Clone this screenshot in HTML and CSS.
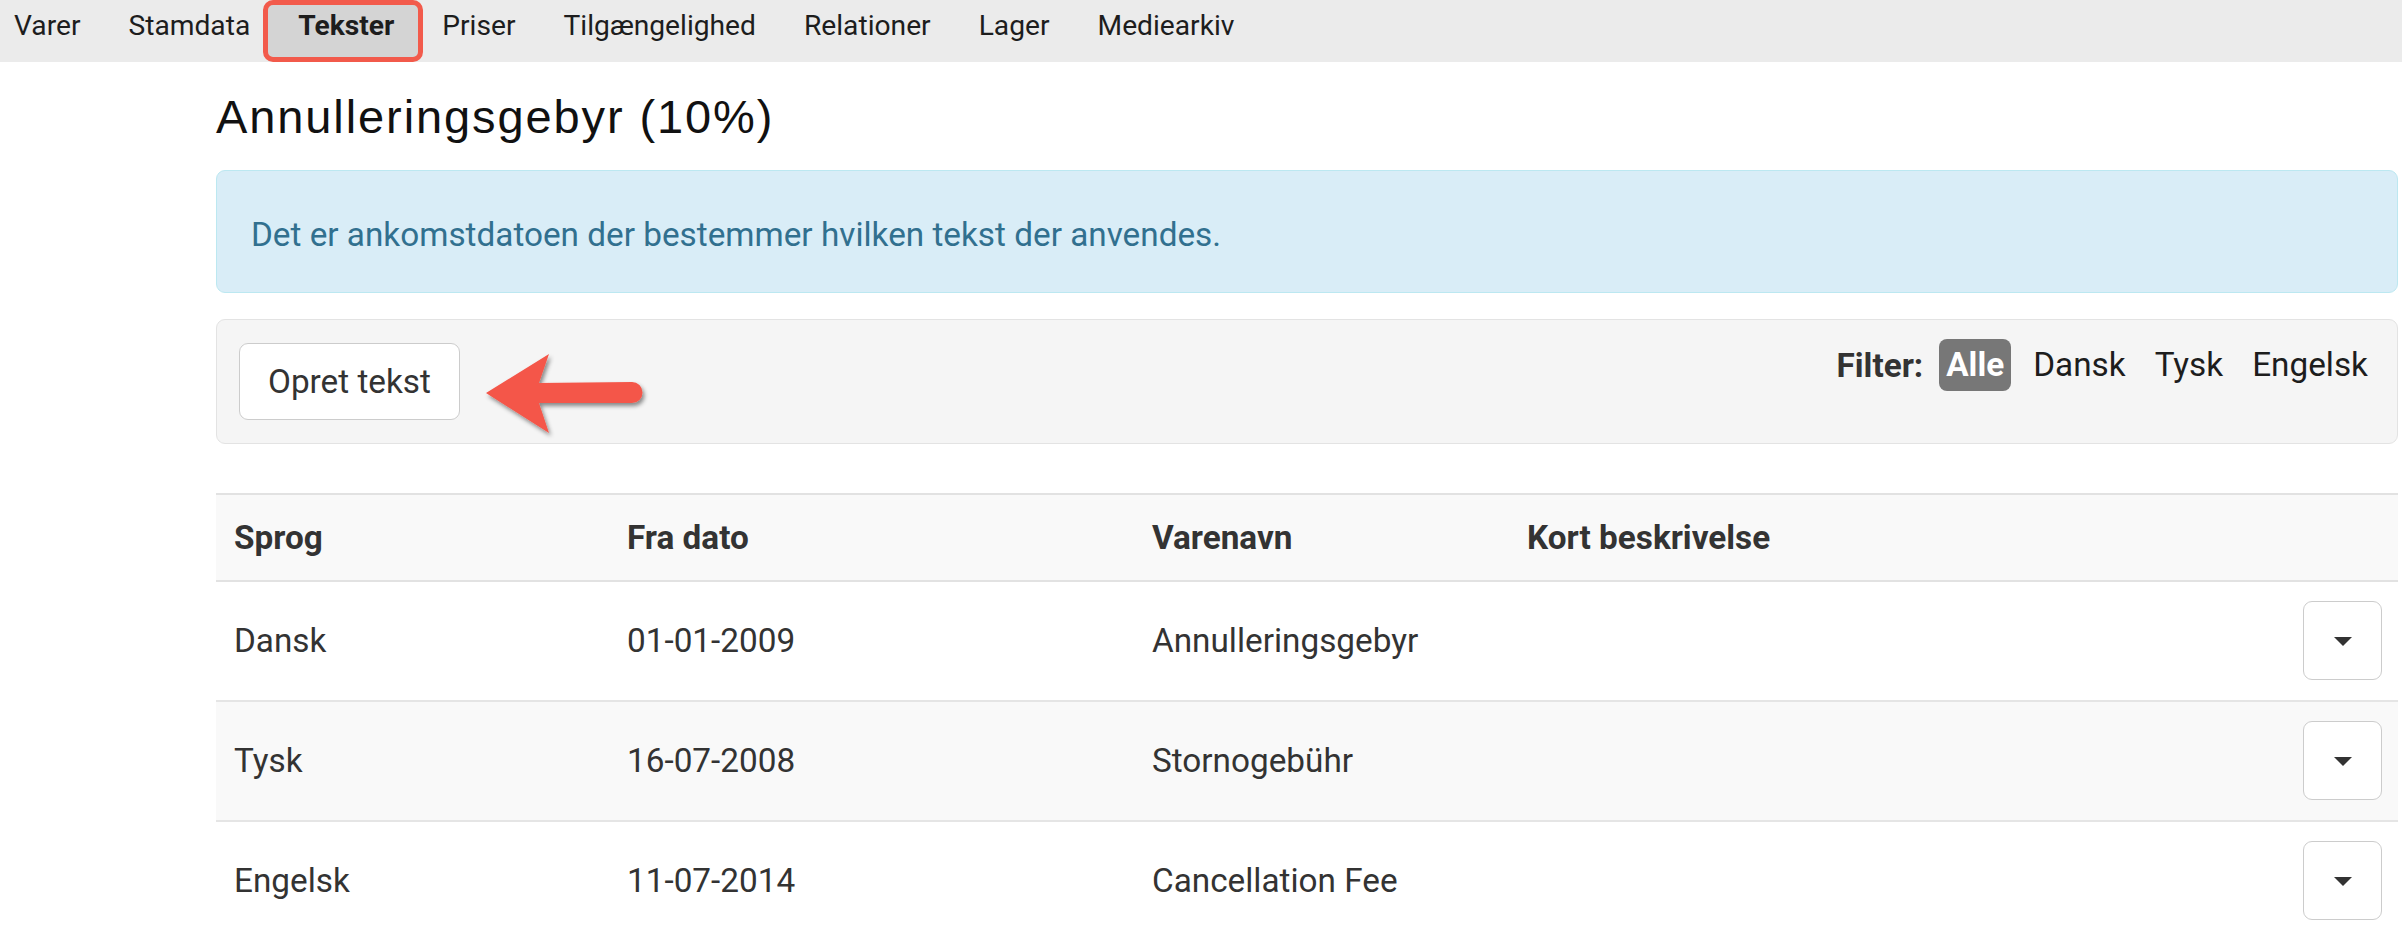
FILE: index.html
```html
<!DOCTYPE html>
<html lang="da">
<head>
  <meta charset="UTF-8">
  <title>Tekster - Annulleringsgebyr</title>
  <link rel="stylesheet" href="styles.css">
</head>
<body>

  <nav class="tabs">
    <a href="#">Varer</a>
    <a href="#">Stamdata</a>
    <a href="#" class="active">Tekster</a>
    <a href="#">Priser</a>
    <a href="#">Tilgængelighed</a>
    <a href="#">Relationer</a>
    <a href="#">Lager</a>
    <a href="#">Mediearkiv</a>
  </nav>

  <div class="page">
    <h2 class="title">Annulleringsgebyr (10%)</h2>

    <div class="alert">Det er ankomstdatoen der bestemmer hvilken tekst der anvendes.</div>

    <div class="toolbar">
      <button class="btn">Opret tekst</button>

      <!-- pil der peger på knappen -->
      <svg class="arrow" width="170" height="100" viewBox="0 0 170 100">
        <defs>
          <filter id="shadow" x="-20%" y="-20%" width="140%" height="150%">
            <feDropShadow dx="2" dy="3" stdDeviation="2" flood-color="#000" flood-opacity="0.45"/>
          </filter>
        </defs>
        <path d="M5 45 L68 6 L58 35 L151 34 A10.5 10.5 0 0 1 151 55 L58 55 L68 85 Z" fill="#f45649" filter="url(#shadow)"/>
      </svg>

      <div class="filter">
        <b>Filter:</b>
        <a href="#" class="on">Alle</a>
        <a href="#">Dansk</a>
        <a href="#">Tysk</a>
        <a href="#">Engelsk</a>
      </div>
    </div>

    <table class="texts">
      <colgroup>
        <col style="width: 393px">
        <col style="width: 525px">
        <col style="width: 375px">
        <col>
        <col style="width: 113px">
      </colgroup>
      <thead>
        <tr>
          <th>Sprog</th>
          <th>Fra dato</th>
          <th>Varenavn</th>
          <th>Kort beskrivelse</th>
          <th></th>
        </tr>
      </thead>
      <tbody>
        <tr>
          <td>Dansk</td>
          <td>01-01-2009</td>
          <td>Annulleringsgebyr</td>
          <td></td>
          <td class="actions"><button class="caret-btn"><span class="caret"></span></button></td>
        </tr>
        <tr>
          <td>Tysk</td>
          <td>16-07-2008</td>
          <td>Stornogebühr</td>
          <td></td>
          <td class="actions"><button class="caret-btn"><span class="caret"></span></button></td>
        </tr>
        <tr>
          <td>Engelsk</td>
          <td>11-07-2014</td>
          <td>Cancellation Fee</td>
          <td></td>
          <td class="actions"><button class="caret-btn"><span class="caret"></span></button></td>
        </tr>
      </tbody>
    </table>
  </div>

</body>
</html>
```

FILE: styles.css
```css
body {
  margin: 0;
  font-family: Roboto, "Liberation Sans", Arial, sans-serif;
  font-size: 33.3px;
  line-height: 45px;
  color: #333;
  background: #fff;
}

/* faneblade øverst */
.tabs {
  display: flex;
  gap: 48px;
  height: 62px;
  padding-left: 14px;
  background-color: #ebebeb;
}
.tabs a {
  font-size: 28.2px;
  line-height: 52px;
  padding-bottom: 10px;
  color: #1d1d1d;
  text-decoration: none;
  white-space: nowrap;
}
.tabs a.active {
  font-weight: bold;
  line-height: 42px;
  margin: 0 -29px 0 -35px;
  padding: 0 24px 10px 30px;
  border: 5px solid #f25a4b;
  border-radius: 10px;
  background-color: #d4d4d4;
}

.page {
  margin: 0 4px 0 216px;
}

.title {
  margin: 28px 0 26px;
  font-family: "Liberation Sans", Arial, sans-serif;
  font-size: 47px;
  line-height: 54px;
  font-weight: normal;
  letter-spacing: 1.9px;
  color: #111;
}

.alert {
  padding: 41px 34px 35px;
  border: 1px solid #bce8f1;
  border-radius: 9px;
  background-color: #d9edf7;
  color: #31708f;
}

.toolbar {
  position: relative;
  display: flex;
  justify-content: space-between;
  align-items: flex-start;
  margin-top: 26px;
  padding: 23px 22px;
  border: 1px solid #e3e3e3;
  border-radius: 9px;
  background-color: #f5f5f5;
}
.btn {
  font: inherit;
  color: #333;
  padding: 15px 28px;
  border: 1px solid #ccc;
  border-radius: 9px;
  background-color: #fff;
}
.arrow {
  position: absolute;
  left: 264px;
  top: 28px;
}
.filter {
  display: flex;
  align-items: center;
  gap: 15px;
  margin-top: -4px;
}
.filter b {
  margin-right: 1px;
}
.filter a {
  padding: 6px 7px;
  line-height: 40px;
  color: #1d1d1d;
  text-decoration: none;
  border-radius: 8px;
}
.filter a.on {
  background-color: #777;
  color: #fff;
  font-weight: bold;
}

/* tabel med tekster */
.texts {
  width: 100%;
  margin-top: 49px;
  border-collapse: collapse;
  table-layout: fixed;
}
.texts th {
  text-align: left;
  padding: 20px 18px;
  border-top: 2px solid #e2e2e2;
  border-bottom: 2px solid #e2e2e2;
  background-color: #f9f9f9;
}
.texts td {
  padding: 19px 18px 20px;
  border-bottom: 2px solid #e5e5e5;
  vertical-align: middle;
  white-space: nowrap;
}
.texts tbody tr:nth-child(even) td {
  background-color: #f9f9f9;
}
.texts td.actions {
  text-align: right;
  padding-right: 16px;
}
.caret-btn {
  width: 79px;
  height: 79px;
  border: 1px solid #ccc;
  border-radius: 9px;
  background-color: #fff;
  vertical-align: middle;
}
.caret {
  display: inline-block;
  width: 0;
  height: 0;
  border-top: 9px solid #333;
  border-left: 9px solid transparent;
  border-right: 9px solid transparent;
  vertical-align: middle;
}
```
